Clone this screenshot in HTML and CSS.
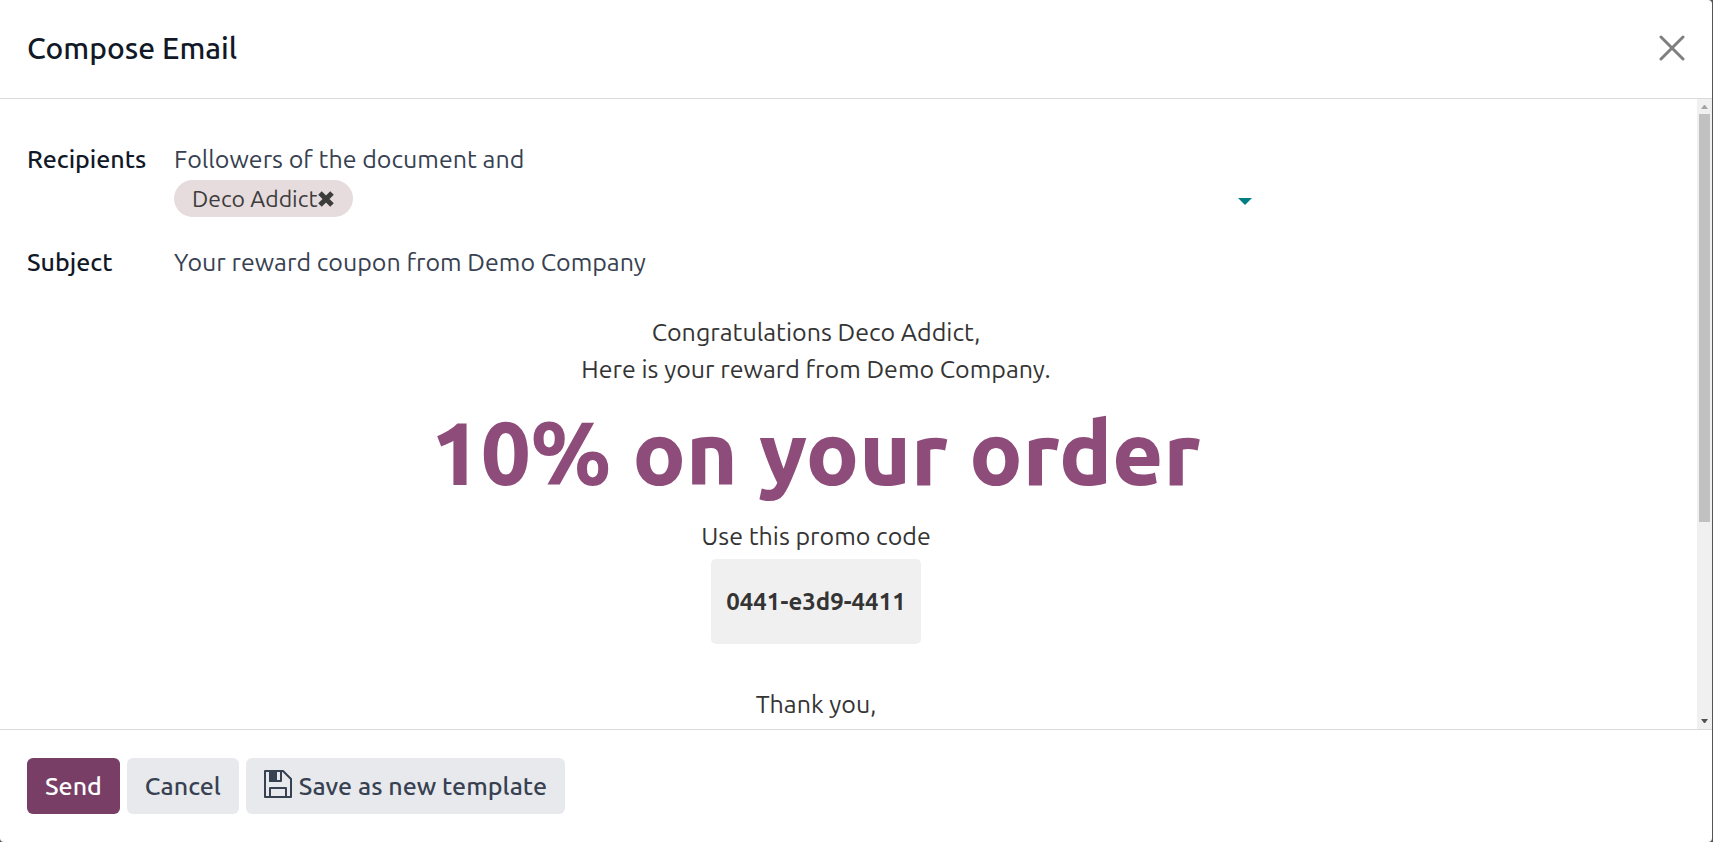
FILE: index.html
```html
<!DOCTYPE html>
<html lang="en">
<head>
  <meta charset="UTF-8" />
  <meta name="viewport" content="width=device-width, initial-scale=1" />
  <title>Compose Email</title>
  <link rel="stylesheet" href="styles.css">
</head>
<body>

  <form class="modal" role="dialog" aria-labelledby="modal-title">
    <header class="modal-header">
      <h1 class="modal-title" id="modal-title">Compose Email</h1>
      <button type="button" class="btn-close" aria-label="Close">
        <svg width="26" height="26" viewBox="0 0 26 26" fill="none" stroke="#7f7f7f" stroke-width="3" stroke-linecap="round">
          <path d="M2 2l22 22M24 2L2 24" />
        </svg>
      </button>
    </header>

    <div class="modal-body">
      <div class="content">
        <div class="fields">
          <label for="recipients">Recipients</label>
          <div>
            <div class="followers">Followers of the document and</div>
            <div class="tags">
              <span class="badge">Deco Addict<button type="button" class="tag-delete" aria-label="Delete">
                  <svg width="18" height="16" viewBox="0 0 18 16" fill="none" stroke="#3c3c3c" stroke-width="5">
                    <path d="M3 2l12 12M15 2L3 14" />
                  </svg>
                </button></span>
              <input type="text" id="recipients" class="tag-input" />
              <button type="button" class="dropdown" aria-label="Show recipients">
                <svg width="14" height="7" viewBox="0 0 14 7"><path d="M0 0h14L7 7z" fill="#017e84" /></svg>
              </button>
            </div>
          </div>

          <label for="subject">Subject</label>
          <input type="text" id="subject" class="subject-input" value="Your reward coupon from Demo Company" />
        </div>

        <!-- Mail template -->
        <div class="mail">
          <p>Congratulations Deco Addict,</p>
          <p>Here is your reward from Demo Company.</p>
          <h2 class="reward">10% on your order</h2>
          <p>Use this promo code</p>
          <strong class="promo-code">0441-e3d9-4411</strong>
          <p class="thanks">Thank you,</p>
        </div>
      </div>

      <div class="scrollbar" aria-hidden="true">
        <svg width="7" height="4" viewBox="0 0 7 4"><path d="M0 4L3 0h1l3 4z" fill="#a3a3a3" /></svg>
        <div class="track"><div class="thumb"></div></div>
        <svg width="7" height="4" viewBox="0 0 7 4"><path d="M0 0h7L4 4H3z" fill="#505050" /></svg>
      </div>
    </div>

    <footer class="modal-footer">
      <button type="submit" class="btn btn-primary">Send</button>
      <button type="button" class="btn">Cancel</button>
      <button type="button" class="btn">
        <svg class="btn-icon" width="28" height="28" viewBox="0 0 28 28" fill="none" stroke="#374151" stroke-width="2" stroke-linejoin="round">
          <path d="M1 1h18l8 8v18H1z" />
          <path d="M6 27V18h16v9" />
          <path d="M6 1v10h11V1" />
          <path d="M6 1h6v10H6z" fill="#374151" />
        </svg>
        Save as new template
      </button>
    </footer>
  </form>

</body>
</html>
```

FILE: styles.css
```css
* {
  box-sizing: border-box;
}

body {
  margin: 0;
  padding-right: 1px;
  height: 100vh;
  overflow: hidden;
  background: #555;
  font-family: Ubuntu, "Noto Sans", sans-serif;
  font-size: 25px;
  line-height: 37px;
  color: #374151;
}

button, input {
  font: inherit;
  color: inherit;
  padding: 0;
  border: none;
  background: none;
}

button {
  cursor: pointer;
}

svg {
  display: block;
  flex-shrink: 0;
}

.modal {
  display: flex;
  flex-direction: column;
  height: 100%;
  background: #fff;
  border-radius: 0 4px 4px 4px;
}

.modal-header {
  display: flex;
  justify-content: space-between;
  align-items: center;
  padding: 27px 27px 29px;
  border-bottom: 1px solid #d8dadd;
}

.modal-title {
  margin: 0;
  font-size: 30px;
  font-weight: 500;
  line-height: 42px;
  color: #111827;
}

.modal-body {
  display: flex;
  flex: 1;
  min-height: 0;
}

.content {
  flex: 1;
  padding: 42px 92px 0 27px;
  overflow: hidden;
}

.fields {
  display: grid;
  grid-template-columns: 147px 1fr;
  row-gap: 27px;
  width: 78%;
}

.fields label {
  font-weight: 500;
  color: #111827;
}

.tags {
  display: flex;
  align-items: center;
  margin-top: 2px;
  padding-right: 6px;
}

.badge {
  display: flex;
  align-items: center;
  padding: 0 18px;
  border-radius: 19px;
  background: #e6dbdd;
  font-size: 23px;
  color: #3c3c3c;
}

.tag-input {
  flex: 1;
  min-width: 0;
  outline: none;
}

.dropdown {
  padding: 12px 0 6px;
}

.subject-input {
  width: 100%;
  height: 37px;
}

.mail {
  margin-top: 33px;
  text-align: center;
  color: #343434;
}

.mail p {
  margin: 0;
}

.reward {
  margin: 0;
  font-size: 88px;
  font-weight: 800;
  line-height: 130px;
  color: #8e4c7a;
}

.promo-code {
  display: inline-block;
  margin: 4px 0 42px;
  padding: 24px 15px;
  border-radius: 5px;
  background: #f0f0f0;
  font-size: 24px;
  font-weight: 600;
}

.scrollbar {
  display: flex;
  flex-direction: column;
  align-items: center;
  width: 15px;
  padding: 6px 0;
  background: #f0f0f0;
}

.track {
  flex: 1;
  width: 11px;
  margin: 5px 0;
}

.thumb {
  height: 68%;
  background: #c1c1c1;
}

.modal-footer {
  display: flex;
  gap: 7px;
  padding: 28px 27px;
  border-top: 1px solid #d8dadd;
}

.btn {
  display: flex;
  align-items: center;
  gap: 7px;
  padding: 10px 18px;
  border-radius: 6px;
  background: #e7e9ed;
  font-weight: 500;
  line-height: 36px;
}

.btn-icon {
  margin-bottom: 4px;
}

.btn-primary {
  background: #783e66;
  color: #fff;
}
```
